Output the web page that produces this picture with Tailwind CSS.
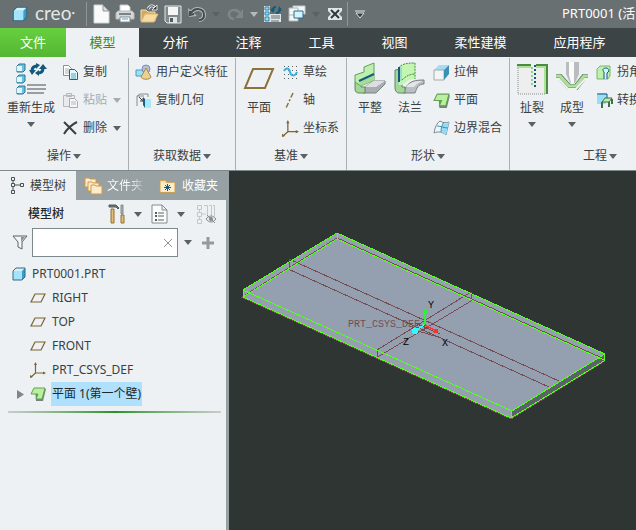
<!DOCTYPE html>
<html lang="zh-CN">

<head>
    <meta charset="utf-8">
    <title>PRT0001</title>
    <meta name="viewport" content="width=device-width, initial-scale=1">
    <script src="https://cdn.jsdelivr.net/npm/@tailwindcss/browser@4"></script>
</head>

<body class="flex flex-col h-screen overflow-hidden bg-[#edf1f3] text-xs text-[#3a3f42] font-['Noto_Sans','Noto_Sans_CJK_SC',sans-serif]">

    <!-- shared icons -->
    <svg class="hidden">
        <symbol id="caret" viewBox="0 0 8 5"><path d="M0 0h8L4 5z" fill="currentColor" /></symbol>
        <symbol id="cube" viewBox="0 0 16 16">
            <path d="M2 5l3-3h9v9l-3 3H2z" fill="#3c9cc4" />
            <path d="M2 5h9v9H2z" fill="#a4e4fa" />
            <path d="M2 5l3-3h9l-3 3z" fill="#d4f3fd" />
            <path d="M2 5l3-3h9v9l-3 3H2z" fill="none" stroke="#2f6c86" />
        </symbol>
        <symbol id="plane" viewBox="0 0 16 16"><path d="M5 4h10l-4 8H1z" fill="none" stroke="#7d6432" stroke-width="1.2" /></symbol>
        <symbol id="csys" viewBox="0 0 16 16">
            <path d="M5.500 2v9h9M5.500 11L1 15" fill="none" stroke="#7d6432" stroke-width="1.2" />
            <path d="M4 3l1.500-3L7 3zM13 9.500l3 1.500-3 1.500zM0 16v-3l3 2z" fill="#7d6432" />
        </symbol>
        <symbol id="sheet" viewBox="0 0 16 16">
            <path d="M5 3h11l-3 12H6z" fill="#77837a" />
            <path d="M4 2h11l-3 11H6l2-5H1z" fill="#b9f09c" stroke="#62a057" />
        </symbol>
        <symbol id="folder" viewBox="0 0 18 16">
            <path d="M1 2h6l1 2h9v11H1z" fill="#f6dfb0" stroke="#c79a4c" />
            <path d="M2 5h14v9H2z" fill="#fbeccb" />
        </symbol>
    </svg>

    <header class="flex items-center h-7 shrink-0 bg-[#687072] text-white">
        <svg class="w-[18px] h-[18px] ml-[11px] shrink-0"><use href="#cube" /></svg>
        <span class="w-[51px] ml-1.5 pb-0.5 text-[19px] leading-6 text-[#e4e7e7] font-['Lato',sans-serif]">creo<span class="text-[6px] align-top">•</span></span>
        <span class="w-px h-6 mr-[2px] bg-[#909799]"></span>

        <div class="flex items-center shrink-0">
            <button type="button" aria-label="新建" class="w-6 flex justify-center">
                <svg width="17" height="20" viewBox="0 0 17 20">
                    <path d="M1 1h9l6 6v12H1z" fill="#fafafa" stroke="#d0d3d4" />
                    <path d="M10 1v6h6z" fill="#d8dcdd" stroke="#8f9698" />
                </svg>
            </button>
            <button type="button" aria-label="打印" class="w-6 flex justify-center">
                <svg width="20" height="20" viewBox="0 0 20 20">
                    <path d="M5 8V1h8l2 2v5" fill="#fff" stroke="#c5c9ca" />
                    <path d="M3 7h14l2 2v6H1V9z" fill="#d5d8d9" stroke="#b5babb" />
                    <path d="M4 9h12v2H4z" fill="#7b8386" />
                    <path d="M5 13h10v5H5z" fill="#fff" stroke="#858c8e" />
                    <path d="M7 15h6" stroke="#5d9fc0" />
                </svg>
            </button>
            <button type="button" aria-label="打开" class="w-6 flex justify-center">
                <svg width="20" height="20" viewBox="0 0 20 20">
                    <path d="M2 17V6h5l2 2h7v9z" fill="#cfa863" stroke="#f2dfb4" />
                    <path d="M2 18l4-8h13l-4 8z" fill="#f6dca2" stroke="#dfb768" />
                    <path d="M9 5c2-4 5-4 7-1" fill="none" stroke="#dfe3e4" stroke-width="3" />
                    <path d="M9 5c2-4 5-4 7-1" fill="none" stroke="#2f3739" />
                    <path d="M13 6h5V1z" fill="#2f3739" stroke="#dfe3e4" />
                </svg>
            </button>
            <button type="button" aria-label="保存" class="w-6 flex justify-center">
                <svg width="18" height="19" viewBox="0 0 18 19">
                    <path d="M1 1h16v17H3l-2-2z" fill="#81898b" stroke="#e3e6e7" />
                    <path d="M4 2h10v8H4z" fill="#f4f5f5" />
                    <path d="M5 12h8v6H5z" fill="#e2e5e6" />
                    <path d="M6 13h3v4H6z" fill="#535b5d" />
                </svg>
            </button>
            <button type="button" aria-label="撤消" class="w-6 flex justify-center">
                <svg width="18" height="16" viewBox="0 0 18 16">
                    <path d="M3 7c4-6 13-5 13 2 0 3-2 5-5 5" fill="none" stroke="#b4babb" stroke-width="4" />
                    <path d="M0 2l1 9 8-1z" fill="#b4babb" />
                    <path d="M3 7c4-6 13-5 13 2 0 3-2 5-5 5M2 5v4l4-1" fill="none" stroke="#454d4f" stroke-width="2" />
                </svg>
            </button>
            <button type="button" aria-label="撤消列表" class="w-3.5 flex justify-center text-[#5b6163]"><svg class="w-2 h-[5px]"><use href="#caret" /></svg></button>
            <button type="button" aria-label="重做" class="w-6 flex justify-center">
                <svg width="17" height="14" viewBox="0 0 17 14">
                    <path d="M13 6C9 1 2 3 2 7c0 3 2 5 5 5" fill="none" stroke="#808789" stroke-width="2.500" />
                    <path d="M16 2v9H8z" fill="#808789" />
                </svg>
            </button>
            <button type="button" aria-label="重做列表" class="w-3.5 flex justify-center text-[#b5babb]"><svg class="w-2 h-[5px]"><use href="#caret" /></svg></button>
            <button type="button" aria-label="重新生成" class="w-6 flex justify-center">
                <svg width="18" height="18" viewBox="0 0 18 18">
                    <path d="M0 1h6v16H0zM6 9h11v8H6z" fill="#dfe4e6" />
                    <path d="M1 2h4v3H1zM1 7h4v3H1zM1 12h4v4H1z" fill="#8fdaf5" stroke="#3585a5" />
                    <path d="M7 11h9M7 13h9M7 16h8" stroke="#687072" />
                    <path d="M8 6c0-3 3-4 4-4M16 3c0 4-2 5-4 5" fill="none" stroke="#155a7c" stroke-width="2" />
                    <path d="M6 4h5l-2 4zM14 6l1-5 3 4z" fill="#155a7c" />
                </svg>
            </button>
            <button type="button" aria-label="窗口" class="w-6 flex justify-center">
                <svg width="18" height="18" viewBox="0 0 18 18">
                    <path d="M5 1h12v8H5z" fill="#f4f6f6" stroke="#c6cbcc" />
                    <path d="M1 3h9v13H1zM1 10h9" fill="#f4f6f6" stroke="#aeb5b7" />
                    <path d="M6 6h9v7H6z" fill="#d9f2fb" stroke="#237196" />
                </svg>
            </button>
            <button type="button" aria-label="窗口列表" class="w-3.5 flex justify-center text-[#5b6163]"><svg class="w-2 h-[5px]"><use href="#caret" /></svg></button>
            <button type="button" aria-label="关闭" class="w-6 flex justify-center">
                <svg width="14" height="12" viewBox="0 0 14 12">
                    <path d="M0 0h14v12H0z" fill="#e3e6e6" />
                    <path d="M3 2l8 8M11 2l-8 8" stroke="#33393b" stroke-width="2" />
                    <path d="M0 3l3 3-3 3zM14 3l-3 3 3 3z" fill="#687072" />
                </svg>
            </button>
            <span class="w-px h-6 bg-[#909799]"></span>
            <button type="button" aria-label="自定义" class="w-6 flex justify-center">
                <svg width="10" height="9" viewBox="0 0 10 9">
                    <path d="M0 1h10" stroke="#dfe2e3" />
                    <path d="M1 3h8L5 8z" fill="#33393b" stroke="#dfe2e3" />
                </svg>
            </button>
        </div>
        <span class="ml-[190px] text-[13px] whitespace-nowrap">PRT0001 (活</span>
    </header>

    <nav class="flex h-[29px] shrink-0 bg-[#3c4446] text-[13px] text-white whitespace-nowrap">
        <a href="#" class="w-[66px] flex items-center justify-center bg-linear-to-b from-[#66d03f] to-[#54b633]">文件</a>
        <a href="#" class="w-[73px] flex items-center justify-center bg-[#edf1f3] text-[#3b8a22]">模型</a>
        <a href="#" class="w-[73px] flex items-center justify-center">分析</a>
        <a href="#" class="w-[73px] flex items-center justify-center">注释</a>
        <a href="#" class="w-[73px] flex items-center justify-center">工具</a>
        <a href="#" class="w-[73px] flex items-center justify-center">视图</a>
        <a href="#" class="w-[99px] flex items-center justify-center">柔性建模</a>
        <a href="#" class="w-[99px] flex items-center justify-center">应用程序</a>
    </nav>

    <section class="flex shrink-0 pt-px border-b border-[#7f888a] whitespace-nowrap overflow-hidden">
        <div class="shrink-0 w-[129px] border-r border-[#a9b0b2]">
            <div class="flex h-21">
                <button type="button" class="w-[62px] pt-1 flex flex-col items-center">
                    <svg width="32" height="34" viewBox="0 0 32 34" class="shrink-0">
                        <path d="M2 4l2-2h6v6l-2 2H2zM2 15l2-2h6v6l-2 2H2zM2 26l2-2h6v6l-2 2H2z" fill="#66c2e2" stroke="#2f7593" />
                        <path d="M2 4h5v5H2zM2 15h5v5H2zM2 26h5v5H2z" fill="#dff6fd" />
                        <path d="M12 23h19M12 27h19M12 31h17" stroke="#999fa1" stroke-width="2" />
                        <path d="M17 9c0-4 2-5 5-5M28 6c0 4-2 5-5 5" fill="none" stroke="#14587a" stroke-width="3" />
                        <path d="M14 8h7l-4 5zM24 7h8l-4-5zM21 1v6l4-4zM24 8v6l-4-3z" fill="#14587a" />
                    </svg>
                    <span class="leading-4 mt-1">重新生成</span>
                    <svg class="w-2 h-[5px] mt-1.5 text-[#5b6163]"><use href="#caret" /></svg>
                </button>
                <div class="flex flex-col">
                    <button type="button" class="h-7 flex items-center gap-1">
                        <svg width="17" height="17" viewBox="0 0 17 17">
                            <path d="M1.500 1.500h5l3 3v7h-8z" fill="#fff" stroke="#8b9294" />
                            <path d="M3 5h4M3 7h4M3 9h4" stroke="#a9b0b2" />
                            <path d="M7.500 5.500h5l3 3v7h-8z" fill="#e1f6fd" stroke="#1e6482" />
                            <path d="M9 10h5M9 12h5M9 14h5" stroke="#5da4c0" />
                        </svg>
                        复制
                    </button>
                    <button type="button" class="h-7 flex items-center gap-1 text-[#a6acae]">
                        <svg width="17" height="17" viewBox="0 0 17 17">
                            <path d="M1.500 3.500h11v11h-11zM4.500 1.500h5v3h-5z" fill="#e8eaeb" stroke="#b4b9bb" />
                            <path d="M7.500 6.500h5l3 3v6h-8z" fill="#f5f6f6" stroke="#a6acae" />
                            <path d="M9 10h5M9 12h5" stroke="#b4b9bb" />
                        </svg>
                        粘贴
                        <svg class="w-2 h-[5px] ml-[2px]"><use href="#caret" /></svg>
                    </button>
                    <button type="button" class="h-7 flex items-center gap-1">
                        <svg width="17" height="17" viewBox="0 0 17 17"><path d="M2 2l12 12M15 2C9 5 5 9 2 14" fill="none" stroke="#3a3f42" stroke-width="2" /></svg>
                        删除
                        <svg class="w-2 h-[5px] ml-[2px] text-[#5b6163]"><use href="#caret" /></svg>
                    </button>
                </div>
            </div>
            <button type="button" class="w-full h-7 flex items-center justify-center gap-[2px]">操作 <svg class="w-2 h-[5px] text-[#5b6163]"><use href="#caret" /></svg></button>
        </div>

        <div class="shrink-0 w-[107px] border-r border-[#a9b0b2]">
            <div class="flex flex-col h-21 pl-1.5">
                <button type="button" class="h-7 flex items-center gap-1">
                    <svg width="17" height="17" viewBox="0 0 17 17">
                        <path d="M1 6h8v6H1z" fill="#9be0f8" stroke="#4a9cbd" />
                        <circle cx="11" cy="5" r="4" fill="#b4bfe0" stroke="#7f8bb5" />
                        <path d="M11 4l5 9c-1 3-9 3-10 0z" fill="#eccf92" stroke="#a98946" />
                    </svg>
                    用户定义特征
                </button>
                <button type="button" class="h-7 flex items-center gap-1">
                    <svg width="17" height="17" viewBox="0 0 17 17">
                        <path d="M2 14V4l3-2h8v3M2 4h7" fill="none" stroke="#858c8e" />
                        <path d="M4 5l4 4M8 6v3H5" fill="none" stroke="#3a3f42" />
                        <path d="M8 5l2 2v9l-2-3z" fill="#17607f" />
                        <path d="M10 7h6v9h-6z" fill="#a8e8fb" />
                    </svg>
                    复制几何
                </button>
            </div>
            <button type="button" class="w-full h-7 flex items-center justify-center gap-[2px]">获取数据 <svg class="w-2 h-[5px] text-[#5b6163]"><use href="#caret" /></svg></button>
        </div>

        <div class="shrink-0 w-[111px] border-r border-[#a9b0b2]">
            <div class="flex h-21">
                <button type="button" class="w-[46px] pt-1 flex flex-col items-center">
                    <svg width="32" height="34" viewBox="0 0 32 34" class="shrink-0"><path d="M10 7h20l-8 19H2z" fill="none" stroke="#8d713b" stroke-width="2" /></svg>
                    <span class="leading-4 mt-1">平面</span>
                </button>
                <div class="flex flex-col">
                    <button type="button" class="h-7 flex items-center gap-1">
                        <svg width="17" height="17" viewBox="0 0 17 17" shape-rendering="crispEdges">
                            <path d="M2 2.500h14M2 6.500h14M2 10.500h14M2 14.500h14" stroke="#5b6163" stroke-dasharray="1 3" />
                            <path d="M2 7c2-4 5-3 6 1s5 5 7 0" fill="none" stroke="#36b0e0" stroke-width="2" shape-rendering="auto" />
                        </svg>
                        草绘
                    </button>
                    <button type="button" class="h-7 flex items-center gap-1">
                        <svg width="17" height="17" viewBox="0 0 17 17"><path d="M11 1L4 16" stroke="#8d713b" stroke-width="1.500" stroke-dasharray="5 2 2 2" /></svg>
                        轴
                    </button>
                    <button type="button" class="h-7 flex items-center gap-1">
                        <svg class="w-[17px] h-[17px]"><use href="#csys" /></svg>
                        坐标系
                    </button>
                </div>
            </div>
            <button type="button" class="w-full h-7 flex items-center justify-center gap-[2px]">基准 <svg class="w-2 h-[5px] text-[#5b6163]"><use href="#caret" /></svg></button>
        </div>

        <div class="shrink-0 w-[163px] border-r border-[#a9b0b2]">
            <div class="flex h-21 pl-[3px]">
                <button type="button" class="w-10 pt-1 flex flex-col items-center">
                    <svg width="32" height="34" viewBox="0 0 32 34" class="shrink-0">
                        <path d="M11 25l8-6h12v3l-9 9H9z" fill="#a8adaf" stroke="#7b8284" />
                        <path d="M11 25l8-6h12l-9 6z" fill="#dcdfe0" />
                        <path d="M1 20v7c0 3 2 4 4 4h6v-6H7v-5z" fill="#a4d69c" stroke="#5d8a5c" />
                        <path d="M1 20v-7l9-3V5l10-4v17L7 24z" fill="#bfefaf" stroke="#62a057" />
                        <path d="M5 20l15-7v5L7 24z" fill="#a4dc98" />
                        <path d="M5 19l15-7" stroke="#155a7c" stroke-width="2" />
                    </svg>
                    <span class="leading-4 mt-1">平整</span>
                </button>
                <button type="button" class="w-10 pt-1 flex flex-col items-center">
                    <svg width="32" height="34" viewBox="0 0 32 34" class="shrink-0">
                        <path d="M12 25c4-6 9-7 18-7v4c-6 0-7 4-9 9H9z" fill="#b9bec0" stroke="#7b8284" />
                        <path d="M12 25c4-5 9-6 17-6-4 1-7 3-9 6z" fill="#e4e7e7" />
                        <path d="M1 8v18c0 3 2 5 4 5h6v-6H8V7z" fill="#a4d69c" stroke="#5d8a5c" />
                        <path d="M4 6C8 2 12 1 21 1v16c-5 0-9 2-13 6H5z" fill="#c4f5b1" />
                        <path d="M4 6C8 2 12 1 21 1v16M8 18c4-4 8-6 13-6" fill="none" stroke="#3f8a48" stroke-dasharray="2 1" />
                        <path d="M5 5v15" stroke="#155a7c" stroke-width="2" />
                        <path d="M7 5v14" stroke="#66c8ea" />
                    </svg>
                    <span class="leading-4 mt-1">法兰</span>
                </button>
                <div class="flex flex-col pl-[3px]">
                    <button type="button" class="h-7 flex items-center gap-1">
                        <svg width="17" height="17" viewBox="0 0 17 17">
                            <path d="M1 6l5-5h10l-5 5z" fill="#a5dcf2" />
                            <path d="M1 6h10v10H1z" fill="#f3f4f4" stroke="#a4aaac" />
                            <path d="M11 6l5-5v9l-5 6z" fill="#3d8fb3" />
                        </svg>
                        拉伸
                    </button>
                    <button type="button" class="h-7 flex items-center gap-1">
                        <svg class="w-[17px] h-[17px]"><use href="#sheet" /></svg>
                        平面
                    </button>
                    <button type="button" class="h-7 flex items-center gap-1">
                        <svg width="17" height="17" viewBox="0 0 17 17">
                            <path d="M1 13C2 7 4 3 7 1c3 2 6 2 9 1-1 5-2 8-3 13-3-3-8-4-12-2z" fill="#eaf8fd" stroke="#7b8a8f" />
                            <path d="M10 3c3 1 4 0 6-1-1 5-2 8-3 13-2-2-3-2-5-3z" fill="#94dcf6" />
                            <path d="M4 6c4 0 7 2 11 2M8 12c0-4 1-7 3-10" fill="none" stroke="#4d8ba6" />
                        </svg>
                        边界混合
                    </button>
                </div>
            </div>
            <button type="button" class="w-full h-7 flex items-center justify-center gap-[2px]">形状 <svg class="w-2 h-[5px] text-[#5b6163]"><use href="#caret" /></svg></button>
        </div>

        <div class="shrink-0 w-[180px]">
            <div class="flex h-21 pl-[2px]">
                <button type="button" class="w-10 pt-1 flex flex-col items-center">
                    <svg width="32" height="34" viewBox="0 0 32 34" class="shrink-0">
                        <path d="M2 5h28v27H2z" fill="#eeeeef" />
                        <path d="M1 5h14M20 5h9v27" fill="none" stroke="#a9e394" stroke-width="2" />
                        <path d="M1 3h14M20 3h11v29" fill="none" stroke="#4d8a46" stroke-width="2" />
                        <path d="M2 6v26h27" fill="none" stroke="#868d8f" stroke-dasharray="1 1" />
                        <path d="M16 5v20" stroke="#8fcf88" stroke-width="2" stroke-dasharray="2 2" />
                        <path d="M19 3v22" stroke="#155a7c" stroke-width="2" stroke-dasharray="2 2" />
                    </svg>
                    <span class="leading-4 mt-1">扯裂</span>
                    <svg class="w-2 h-[5px] mt-1.5 text-[#5b6163]"><use href="#caret" /></svg>
                </button>
                <button type="button" class="w-10 pt-1 flex flex-col items-center">
                    <svg width="32" height="34" viewBox="0 0 32 34" class="shrink-0">
                        <path d="M0 15h4l9 10h7l8-10h4" fill="none" stroke="#6d7577" stroke-width="6" />
                        <path d="M0 14h4l9 10h7l8-10h4" fill="none" stroke="#a9e394" stroke-width="3" />
                        <path d="M0 17h3l9 10h8l9-10h3" fill="none" stroke="#f0f2f2" stroke-width="2" />
                        <path d="M10 0h13v12l-4 9h-5l-4-9z" fill="#b9bdbf" />
                        <path d="M13 0h5v21h-3l-2-8z" fill="#fafafa" />
                    </svg>
                    <span class="leading-4 mt-1">成型</span>
                    <svg class="w-2 h-[5px] mt-1.5 text-[#5b6163]"><use href="#caret" /></svg>
                </button>
                <div class="flex flex-col pl-1">
                    <button type="button" class="h-7 flex items-center gap-1">
                        <svg width="17" height="17" viewBox="0 0 17 17">
                            <path d="M4 2h10v10l-2 3H1V5z" fill="#bdf0ab" stroke="#7bb870" />
                            <path d="M8 15V8c-4-4 5-6 5-1l-2 2v6" fill="#d6f3fd" stroke="#155a7c" />
                        </svg>
                        拐角
                    </button>
                    <button type="button" class="h-7 flex items-center gap-1">
                        <svg width="17" height="17" viewBox="0 0 17 17">
                            <path d="M1 3l2-2h8v9l-2 2H1z" fill="#98def7" />
                            <path d="M1 2h10v5" fill="none" stroke="#155a7c" />
                            <path d="M6 10l3-4h7l-3 4z" fill="#bdf0ab" stroke="#3f6f44" />
                            <path d="M6 10v6M13 10v5M16 7v5" stroke="#3f6f44" stroke-width="2" />
                        </svg>
                        转换
                    </button>
                </div>
            </div>
            <button type="button" class="w-full h-7 flex items-center justify-center gap-[2px]">工程 <svg class="w-2 h-[5px] text-[#5b6163]"><use href="#caret" /></svg></button>
        </div>
    </section>

    <div class="flex flex-1 min-h-0">
        <aside class="w-[229px] shrink-0 border-r-3 border-[#97a0a2]">
            <div class="flex h-[29px] bg-[#97a0a2] text-white whitespace-nowrap">
                <button type="button" class="w-[76px] pl-2.5 flex items-center gap-1.5 bg-[#edf1f3] text-[#3a3f42]">
                    <svg width="14" height="19" viewBox="0 0 14 19" class="shrink-0">
                        <path d="M1.500 1.500h3v3h-3zM1.500 7.500h3v3h-3zM1.500 14.500h3v3h-3zM10.500 7.500h3v3h-3zM3 5v2M3 11v3M5 9h5" fill="none" stroke="#4b5254" />
                    </svg>
                    模型树
                </button>
                <button type="button" class="w-[75px] pl-2 flex items-center gap-1">
                    <svg width="19" height="19" viewBox="0 0 19 19" class="shrink-0">
                        <g fill="#fbeccb" stroke="#d09a48">
                            <path d="M1 2h4l1 1h6v8H1z" />
                            <path d="M4 6h4l1 1h6v8H4z" />
                            <path d="M7 9h4l1 1h6v8H7z" />
                        </g>
                    </svg>
                    <span class="bg-linear-to-r from-white from-60% to-white/20 bg-clip-text text-transparent">文件夹</span>
                </button>
                <button type="button" class="pl-2 flex items-center gap-1.5">
                    <span class="relative">
                        <svg class="w-[17px] h-4"><use href="#folder" /></svg>
                        <svg class="absolute left-[5px] top-[6px]" width="7" height="7" viewBox="0 0 7 7"><path d="M3.500 0v7M0 3.500h7M1 1l5 5M6 1L1 6" stroke="#155a7c" /></svg>
                    </span>
                    收藏夹
                </button>
            </div>

            <div class="flex items-center h-7 pl-7">
                <h2 class="w-20 font-medium text-[#22282a]">模型树</h2>
                <button type="button" aria-label="设置">
                    <svg width="17" height="20" viewBox="0 0 17 20">
                        <path d="M1 1h7l3 3-1 1-2-2H1z" fill="#6d7577" stroke="#50585b" />
                        <path d="M3 5h3v14H3z" fill="#e3bb73" stroke="#8f7038" />
                        <path d="M13 1h2v9h-2z" fill="#a8afb1" stroke="#858c8e" />
                        <path d="M13 11h3v8h-3z" fill="#e3bb73" stroke="#8f7038" />
                    </svg>
                </button>
                <button type="button" aria-label="设置列表" class="w-[26px] flex justify-center text-[#5b6163]"><svg class="w-2 h-[5px]"><use href="#caret" /></svg></button>
                <button type="button" aria-label="显示">
                    <svg width="17" height="20" viewBox="0 0 17 20">
                        <path d="M1 1h10l5 5v13H1zM11 1v5h5" fill="#fafbfb" stroke="#858c8e" />
                        <path d="M7 9h6M7 12h6M7 16h6" stroke="#5b6163" />
                        <path d="M4 8h2v2H4zM4 11h2v2H4zM4 15h2v2H4z" fill="#5b6163" />
                    </svg>
                </button>
                <button type="button" aria-label="显示列表" class="w-[26px] flex justify-center text-[#5b6163]"><svg class="w-2 h-[5px]"><use href="#caret" /></svg></button>
                <button type="button" aria-label="树列" class="ml-0.5">
                    <svg width="21" height="21" viewBox="0 0 21 21">
                        <path d="M1.500 1.500h4v4h-4zM1.500 8.500h4v4h-4zM1.500 15.500h4v4h-4zM3.500 6v2M3.500 13v2M6 10h4M8 1.500h3.500v11M13 1.500h2.500v11M17 1.500h1.500v11" fill="none" stroke="#c2c7c9" />
                        <path d="M10 15c3-4 7-4 10 0-3 4-7 4-10 0z" fill="#e5e8e9" stroke="#858c8e" />
                        <path d="M11 11l8 8" stroke="#858c8e" />
                        <circle cx="15" cy="15" r="2" fill="#858c8e" />
                    </svg>
                </button>
            </div>

            <div class="flex items-center pl-3">
                <svg width="16" height="15" viewBox="0 0 16 15" class="mr-1">
                    <path d="M1 1h14L10 7v7l-4-2V7z" fill="#f4f5f5" stroke="#5b6163" />
                    <path d="M9 2h4L9 7z" fill="#8b9294" />
                </svg>
                <div class="relative w-[146px]">
                    <input type="text" aria-label="搜索模型树" class="block w-full h-[29px] px-2 bg-white border border-[#7e898b]">
                    <button type="button" aria-label="清除" class="absolute right-1.5 top-[11px]">
                        <svg width="8" height="8" viewBox="0 0 8 8"><path d="M0 0l8 8M8 0L0 8" stroke="#8b9294" /></svg>
                    </button>
                </div>
                <button type="button" aria-label="搜索选项" class="w-[19px] flex justify-center text-[#5b6163]"><svg class="w-2 h-[5px]"><use href="#caret" /></svg></button>
                <button type="button" aria-label="添加" class="ml-[5px]">
                    <svg width="12" height="12" viewBox="0 0 12 12"><path d="M6 0v12M0 6h12" stroke="#949a9c" stroke-width="3" /></svg>
                </button>
            </div>

            <ul class="mt-[5px]">
                <li class="flex items-center h-6 pl-[11px] gap-[5px]"><svg class="w-4 h-4"><use href="#cube" /></svg>PRT0001.PRT</li>
                <li class="flex items-center h-6 pl-[30px] gap-1.5"><svg class="w-4 h-4"><use href="#plane" /></svg>RIGHT</li>
                <li class="flex items-center h-6 pl-[30px] gap-1.5"><svg class="w-4 h-4"><use href="#plane" /></svg>TOP</li>
                <li class="flex items-center h-6 pl-[30px] gap-1.5"><svg class="w-4 h-4"><use href="#plane" /></svg>FRONT</li>
                <li class="flex items-center h-6 pl-[30px] gap-1.5"><svg class="w-4 h-4"><use href="#csys" /></svg>PRT_CSYS_DEF</li>
                <li class="flex items-center h-6 pl-[17px]">
                    <svg width="7" height="9" viewBox="0 0 7 9" class="mr-1.5"><path d="M0 0l7 4.500L0 9z" fill="#808688" /></svg>
                    <svg class="w-4 h-4 mr-[5px]"><use href="#sheet" /></svg>
                    <span class="px-px leading-6 bg-[#afe1fd] text-[#22282a]">平面 1(第一个壁)</span>
                </li>
            </ul>
            <div class="h-[2px] mt-[5px] ml-2 mr-[5px] bg-linear-to-r from-[#c9cdce] via-[#219421] to-[#c9cdce]"></div>
        </aside>

        <main class="flex-1 min-w-0 bg-[#2f3533] overflow-hidden">
            <svg width="407" height="360" viewBox="229 171 407 360" fill="none" shape-rendering="crispEdges">
                <path d="M337 233L605 354L604 361L511 418L243 297V290z" fill="#94a0b0" />
                <path d="M512 411L605 354L604 361L511 418z" fill="#5a6468" />
                <!-- datum planes -->
                <g stroke="#744c52">
                    <path d="M242 297L337 238L604 359M241 297L511 419L605 361" />
                    <path d="M289 259L559 381M288 269L549 387M289 259v10" />
                    <path d="M471 292L377 350M471 301L376 358M471 292v9M377 350v8" />
                    <path d="M415 323L440 334M418 331L438 337M424 322v9" />
                </g>
                <g stroke="#54ff1c">
                    <path d="M243 290L337 233L605 354L512 411z" />
                    <path d="M243 297L511 418L604 361" />
                    <path d="M243 297L337 239L604 360" />
                    <path d="M243 290v7M337 233v6M512 411l-1 7M604 354v7" />
                </g>
                <text x="348" y="327" font-size="10" fill="#744c52" font-family="Liberation Mono, monospace">PRT_CSYS_DEF</text>
                <path d="M425 325V312" stroke="#32f032" stroke-width="1.500" />
                <path d="M425 325L436 331" stroke="#ff3030" stroke-width="1.500" />
                <path d="M424 325L415 331" stroke="#2ffcff" stroke-width="1.500" />
                <circle cx="425" cy="312" r="2.500" fill="#32f032" />
                <circle cx="436" cy="331" r="2" fill="#ff3030" />
                <circle cx="415" cy="331" r="3" fill="#2ffcff" />
                <g font-size="10" fill="#000" font-family="Liberation Mono, monospace">
                    <text x="428" y="308">Y</text>
                    <text x="442" y="346">X</text>
                    <text x="403" y="345">Z</text>
                </g>
            </svg>
        </main>
    </div>
</body>

</html>
